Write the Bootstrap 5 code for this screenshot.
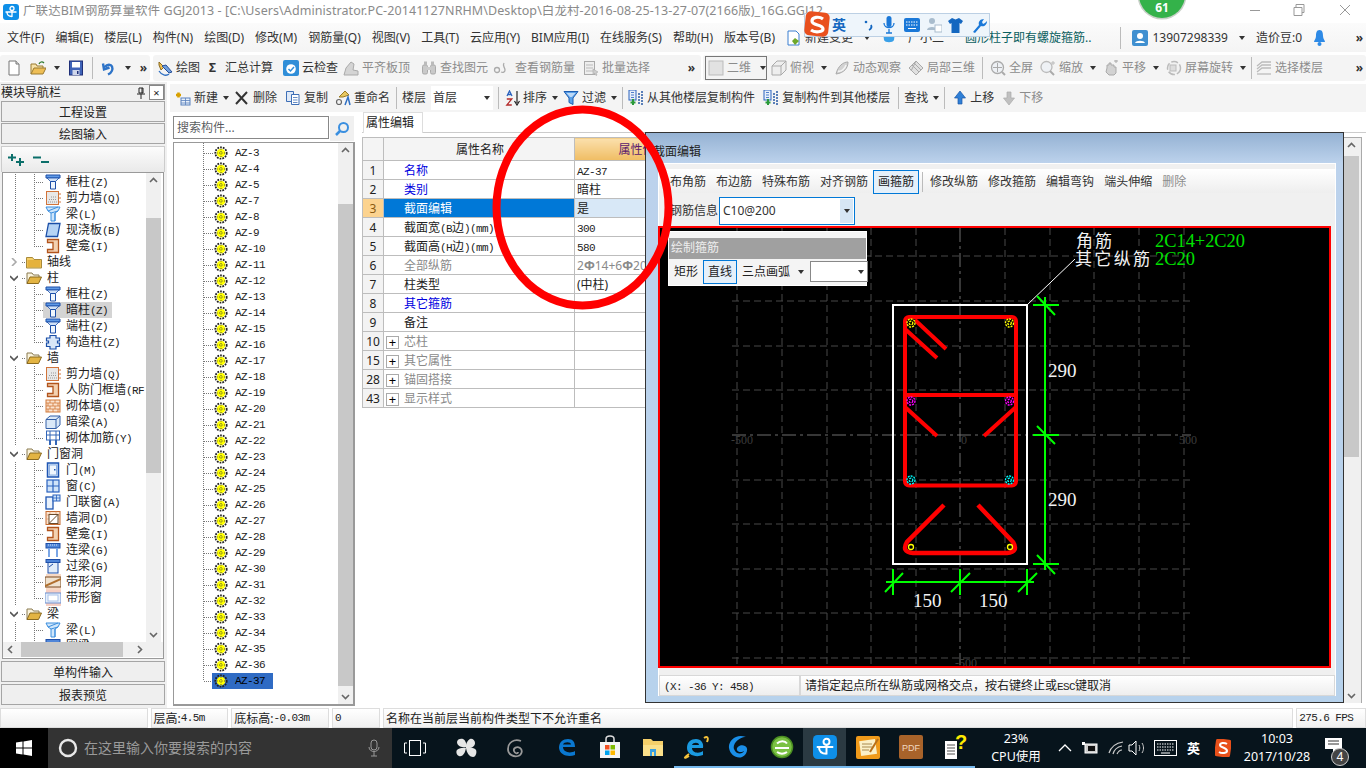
<!DOCTYPE html>
<html lang="zh-CN">
<head>
<meta charset="utf-8">
<title>GGJ2013</title>
<link href="https://cdn.jsdelivr.net/npm/bootstrap@5.3.0/dist/css/bootstrap.min.css" rel="stylesheet">
<style>
html,body{margin:0;height:768px;overflow:hidden;background:#fff;font:12px/1 "Noto Sans","Noto Sans CJK SC",sans-serif;color:#222}
.cad-app{width:1366px;height:768px;position:relative;overflow:hidden}
.m{font-family:"Liberation Mono","Noto Sans CJK SC",monospace;font-size:11px;letter-spacing:-.6px}
svg{display:block;flex:none}
.ic{width:16px;height:16px}
.ic14{width:14px;height:16px}
.title-row{height:23px;background:#fff;color:#8a8a8a;font-size:12.5px;white-space:nowrap}
.title-text{margin-left:4px;width:800px;overflow:hidden;letter-spacing:.08px}
.menu-row{height:29px;background:linear-gradient(#fbfbfb,#f4f4f4);color:#333;white-space:nowrap;padding-left:7px;gap:11px}
.menu-news{color:#0a5f5f;margin-left:10px}
.menu-num{margin-left:-7px}
.tool-row{height:30px;background:#fff;padding-top:3px}
.tg{height:26px;background:#f4f4f4;border-radius:3px;white-space:nowrap;color:#333;gap:8px}
.g1{width:150px;padding-left:6px}
.g2{width:548px;padding-left:4px;margin-left:3px}
.g3{width:663px;margin-left:2px;padding-left:2px;gap:7px}
.gs{gap:9px;margin-left:1px;margin-right:2px}
.mn3{margin-left:-3px}
.off{color:#8c8c8c}
.car{width:0;height:0;border:3px solid transparent;border-top:4px solid #333;border-bottom:0;flex:none}
.sep{width:1px;height:22px;background:#bbb;flex:none}
.sx{margin-left:-2px;margin-right:-3px}
.dim-box{width:62px;height:24px;border:1px solid #777;gap:3px;padding-left:2px;margin-right:-3px}
.pane-left{width:167px;height:626px;background:#f0f0f0;padding:2px 2px 0 1px}
.pane-head{height:16px;padding-left:0;border:1px solid #999;border-width:1px 1px 0 0;color:#222}
.x-btn{width:15px;height:15px;border:1px solid #888;background:#fff;font-size:11px}
.navbtn{--bs-btn-padding-y:0;height:21px;width:100%;background:#efefef;border:1px solid #a5a5a5;border-radius:0;font-size:12px;color:#222;line-height:21px;padding:0;display:block;margin-top:1px}
.nb-low{margin-top:2px}
.tree-tool{height:26px;margin-top:2px;background:linear-gradient(#fcfcfc,#e9e9e9);padding-left:6px;gap:8px;border:1px solid #ccc;border-width:1px 1px 0 1px}
.tree-wrap{height:487px;border:1px solid #9a9a9a;margin:0 1px;background:#fff}
.tree-body{height:469px;width:100%;overflow:hidden}
.tree-list{width:143px;padding-top:1px;overflow:hidden}
.tr{height:16px;white-space:nowrap;color:#222;background-repeat:no-repeat}
.tr-1{padding-left:23px;gap:5px;background-image:repeating-linear-gradient(to right,#777 0 1px,transparent 1px 2px);background-size:4px 1px;background-position:19px 8px}
.tr-2{padding-left:42px;gap:5px;background-image:repeating-linear-gradient(to bottom,#777 0 1px,transparent 1px 2px),repeating-linear-gradient(to bottom,#777 0 1px,transparent 1px 2px),repeating-linear-gradient(to right,#777 0 1px,transparent 1px 2px);background-size:1px 100%,1px 100%,10px 1px;background-position:12px 0,31px 0,31px 8px}
.tr-end{background-size:1px 100%,1px 9px,10px 1px}
.chev{width:8px;height:8px;margin-left:-16px;margin-right:3px}
.sel-gray{background-color:#d4d4d4;margin-left:-2px;padding:0 4px 0 2px;height:16px;gap:5px}
.vs{width:15px;background:#f0f0f0}
.vs-thumb{background:#c8c8c8}
.hs{height:15px;background:#f0f0f0;width:100%}
.arr{width:15px;height:15px;flex:none}
.tree-thumb{height:255px;margin-top:30px}
.h-thumb{width:102px;margin-left:3px}
.hs-pad{width:16px}
.comp-thumb{height:482px;margin-top:46px}
.main-thumb{height:301px;margin-top:3px;width:15px}
.pane-right{width:1199px;height:626px}
.bar2{height:28px;margin-top:2px;background:#f4f4f4;padding-left:5px;white-space:nowrap;color:#333;gap:5px;margin-left:3px}
.mg1{margin-left:1px}.mg2{margin-left:2px}.mg3{margin-left:3px}.mg6{margin-left:6px}
.floor-sel{width:62px;height:24px;background:#fff;padding-left:2px;justify-content:space-between;padding-right:3px}
.comp-col{width:195px;padding-left:6px}
.search-row{height:26px;margin-top:4px;width:181px}
.search-in{width:156px;height:23px;border:1px solid #888;border-radius:0;font-size:12px;padding:2px 3px;color:#777}
.search-btn{width:24px;height:25px;background:#f0f0f0;margin-left:1px}
.comp-box{height:564px;width:182px;border:1px solid #999;border-width:1px 2px 2px 1px;background:#fff}
.comp-list{width:163px;height:100%;overflow:hidden;padding-top:2px;background:repeating-linear-gradient(to bottom,#777 0 1px,transparent 1px 2px) 29px 0/1px 538px no-repeat}
.cr{height:16px;padding-left:31px;white-space:nowrap;color:#222;font-family:"Liberation Mono",monospace;font-size:11px;letter-spacing:-.6px;background:repeating-linear-gradient(to right,#777 0 1px,transparent 1px 2px) 30px 8px/10px 1px no-repeat}
.cr>span{display:inline-flex;align-items:center;height:16px;padding-left:9px;gap:7px;padding-right:8px;margin-left:7px}
.cr .on{background:#2f6bc4;color:#000}
.cr .ca{width:14px;height:14px;margin-left:-7px}
.work{width:1004px;height:594px;position:relative}
.tabbar{height:21px;border-bottom:1px solid #ccc;padding-left:1px;--bs-nav-tabs-border-width:0}
.tab-k{height:21px;width:60px;background:#fff;border:1px solid #ddd;border-bottom:0;color:#222;padding:4px 0 0 2px;display:block}
.pgrid{width:336px;table-layout:fixed;margin-top:4px;border-collapse:collapse;--bs-table-bg:transparent}
.c1{width:21px}.c2{width:191px}.c3{width:124px}
.pgrid td,.pgrid th{height:19px;padding:2px 0 0 2px;border:1px solid #bdbdbd;vertical-align:middle;white-space:nowrap;overflow:hidden;font-weight:400;color:#222;line-height:1;font-size:12px}
.pgrid th{height:23px;background:#f4f4f4;text-align:center;box-shadow:none}
.pgrid .num{background:#f3f3f3;text-align:center;padding:1px 0 0}
.pgrid .nm{padding-left:20px}
.pgrid td.lk{color:#0000e0}
.pgrid td.gy,.pgrid td.gy span{color:#8a8a8a}
.pgrid th.vh{background:linear-gradient(#fbe0ad,#f0bd63);color:#5a1a6e;padding:2px 0 0}
.pgrid td.rnum{background:#fcd38f;color:#8a5a10}
.pgrid td.rname{background:#0078d7;color:#fff}
.pgrid td.rval{background:#d8e8f7}
.pm{width:13px;height:13px;border:1px solid #aaa;background:#fff;font-size:13px;line-height:10px;text-align:center;margin-left:-18px;margin-right:5px;flex:none}
.pgrid td.gy .pm{color:#000}
.dlg{position:absolute;left:283px;top:20px;width:699px;height:571px;border:1px solid #333;background:linear-gradient(#95b2d3 0,#bcd2ec 30px,#b7d2ec 100%);padding:0 8px 0 12px}
.dlg-title{height:30px;color:#222;padding:13px 0 0;margin-left:-5px;white-space:nowrap}
.dlg-client{height:533px;background:#f0f0f0;width:678px;border:1px solid #fff;border-bottom:0;padding-top:5px}
.strip1{height:24px;background:linear-gradient(#fff,#eee);gap:10px;padding:2px 0 0 11px;color:#333;white-space:nowrap}
.strip2{height:30px;margin-top:3px;padding-left:11px;color:#333;white-space:nowrap}
.active-b{border:1px solid #0078d7;background:#e5f0fa;padding:5px 4px;margin:0 -5px;color:#222}
.sep-v{width:1px;height:20px;background:#bbb;margin:0 -3px 0 -2px}
.combo{width:136px;height:28px;border:1px solid #0078d7;background:#fff;margin-left:1px;padding-left:3px;justify-content:space-between}
.combo-arr{width:13px;height:24px;background:#d6e6f5;margin-right:1px}
.cv-box{height:442px;background:#000;border:2px solid #f00;margin-left:-1px;width:673px;position:relative;overflow:hidden}
.cv-svg{width:669px;height:438px}
.popup{position:absolute;left:8px;top:3px;width:199px;height:55px;background:#f4f4f4;border:1px solid #fff}
.popup-h{height:21px;margin-top:6px;background:#a0a0a0;color:#eee;padding:4px 0 0 2px}
.popup-b{height:25px;gap:5px;padding-left:5px;color:#222;white-space:nowrap}
.pop-act{margin:0;padding:5px 4px;flex:none}
.dd{width:58px;height:21px;border:1px solid #888;background:#fff;margin-left:1px;justify-content:flex-end;padding-right:3px;flex:none}
.st-row{height:21px;margin-top:7px}
.st-a{width:141px}
.st-p{height:21px;background:linear-gradient(#fff,#eee);border:1px solid #d8d8d8;white-space:nowrap;padding:4px 0 0 4px}
.vbar-main{position:absolute;left:982px;top:25px;width:18px;height:566px;background:#f0f0f0;border-right:1px solid #aaa;border-top:1px solid #aaa}
.status{height:20px;background:#fff;color:#222;white-space:nowrap;gap:3px}
.sb{height:20px;background:linear-gradient(#fff,#f0f0f0);border:1px solid #ddd;padding:1px 0 0 2px}
.s1{width:148px}.s2{width:78px}.s3{width:98px}.s4{width:48px}.s5{width:913px}.s6{width:70px}
.task{height:40px;background:#07141c;color:#fff;position:relative;white-space:nowrap}
.win-s{width:48px;height:40px;background:#000}
.task-search{width:344px;height:40px;background:#333;color:#9a9a9a;font-size:14px;padding-left:10px;gap:6px}
.tk{height:40px;width:43px;position:relative;border-bottom:2px solid transparent}
.tk.run{border-bottom-color:#76b9ed}
.tk.act{background:#2b3a42;border-bottom-color:#76b9ed}
.tasks-a{width:153px;padding-left:12px}
.ms-pin{margin-left:29px}
.ms-swirl{margin-left:28px}
.tasks-b{width:430px}
.tray{color:#fff;font-size:12.5px;line-height:18px}
.cpu-b{width:60px;margin-left:11px}
.tray-icons{gap:10px;margin-left:12px}
.spk{margin-left:-6px}
.kbd{margin-left:-2px}
.tray-s{margin-left:5px}
.clock-b{width:80px;margin-left:6px}
.notif-i{position:absolute;left:1325px;top:10px}
.notif{position:absolute;left:1331px;top:20px;width:18px;height:18px;border-radius:50%;background:#444;border:1px solid #ccc;font-size:12px;color:#fff}
.tray-lang{font-size:13px}
.ime{position:absolute;left:804px;top:13px;width:186px;height:24px;background:#eef5fb;border:1px solid #bcd0e4;gap:9px;padding-left:27px}
.ime-s{position:absolute;left:-1px;top:-3px;width:26px;height:26px}
.ime-t{color:#1467c0;font-weight:700;font-size:14px}
.ime-q{margin-left:9px}
.ime-n{margin-left:-3px}
.ball{position:absolute;left:1137px;top:-30px;width:50px;height:50px}
.ring{position:absolute;left:490px;top:104px;width:186px;height:208px;pointer-events:none}
</style>
</head>
<body>
<svg class="d-none">
<symbol id="ic-col" viewBox="0 0 16 16"><path d="M1 1h14v3H1z" fill="#5f9ae6" stroke="#1c4fa8"/><path d="M2 4l3.500 3.500h5L14 4z" fill="#cfe1f7" stroke="#1c4fa8" stroke-width=".8"/><path d="M5.500 7.500h5V15h-5z" fill="#eef5fc" stroke="#1c4fa8"/></symbol>
<symbol id="ic-wall" viewBox="0 0 16 16"><rect x="1.500" y="1.500" width="12" height="13" fill="#e8e8e8" stroke="#d2743a"/><path d="M3 12h9M4 9.500h8M6 7h5" stroke="#999" stroke-dasharray="1 1"/><path d="M14 4h2M14 8h2M14 12h2" stroke="#d2743a"/></symbol>
<symbol id="ic-beam" viewBox="0 0 16 16"><path d="M1 1h14l-2 4-3 2v8H6V7L3 5z" fill="#cfe6fb" stroke="#3b8ede"/><path d="M3 5L13 1M6 7l7-2M10 7V15" stroke="#3b8ede" fill="none"/></symbol>
<symbol id="ic-slab" viewBox="0 0 16 16"><path d="M3.500 1.500H15L12.500 14.500H1z" fill="#b6d4f5" stroke="#1b4fa8" stroke-width="1.300"/></symbol>
<symbol id="ic-niche" viewBox="0 0 16 16"><path d="M2.500 1.500H13.500V14.500H2.500V11.500H8V4.500H2.500z" fill="#f3d1b0" stroke="#b2541c" stroke-width="1.300"/></symbol>
<symbol id="ic-gz" viewBox="0 0 16 16"><path d="M5 1.500h6v2.500h3.500v3h-2v2h2v3.500H11V15H5v-2.500H1.500V9h2V7h-2V4H5z" fill="#d8e6f7" stroke="#1b4fa8" stroke-width="1.200"/></symbol>
<symbol id="ic-brick" viewBox="0 0 16 16"><rect x="1" y="2" width="14" height="12" fill="#fbe3cf" stroke="#d27a3a"/><path d="M1 5h14M1 8h14M1 11h14M5 2v3M10 2v3M3 5v3M8 5v3M13 5v3M5 8v3M10 8v3M3 11v3M8 11v3M13 11v3" stroke="#d27a3a" stroke-width=".8"/></symbol>
<symbol id="ic-abeam" viewBox="0 0 16 16"><path d="M1 5.500L5 2h10v9l-4 3.500H1z" fill="#dbe9f8" stroke="#3560a8"/><path d="M1 5.500h10v9M11 5.500L15 2" stroke="#3560a8" fill="none"/></symbol>
<symbol id="ic-mesh" viewBox="0 0 16 16"><rect x="1.500" y="1" width="13" height="9" fill="#fff" stroke="#3366b8"/><path d="M1 5h14M5 1v9M11 1v9" stroke="#3366b8"/><path d="M5 10v5M11 10v5" stroke="#3366b8" stroke-width="2"/></symbol>
<symbol id="ic-door" viewBox="0 0 16 16"><rect x="2.500" y="1" width="11" height="14" fill="#cfe0f6" stroke="#1e55b3" stroke-width="1.500"/><rect x="4.500" y="3" width="7" height="10" fill="#f0f6fd" stroke="#6d9ad8" stroke-width=".7"/><rect x="9" y="7" width="1.500" height="1.500" fill="#1e55b3"/></symbol>
<symbol id="ic-win" viewBox="0 0 16 16"><rect x="2" y="2" width="12" height="12" fill="#cfe3f9" stroke="#2a62be" stroke-width="1.200"/><path d="M8 2v12M2 8h12" stroke="#2a62be" stroke-width="1.200"/></symbol>
<symbol id="ic-dw" viewBox="0 0 16 16"><rect x="1" y="3" width="7" height="12" fill="#eaf2fc" stroke="#1e55b3" stroke-width="1.300"/><rect x="8" y="1" width="7" height="6" fill="#cfe3f9" stroke="#2a62be"/><path d="M11.500 1v6M8 4h7" stroke="#2a62be" stroke-width=".8"/></symbol>
<symbol id="ic-hole" viewBox="0 0 16 16"><rect x="1" y="1.500" width="14" height="13" fill="#fbe3cf" stroke="#c56a2e"/><path d="M1 5h14M1 9h14M5 1.500v13M11 1.500v13" stroke="#e09a68" stroke-width=".7"/><rect x="4" y="4.500" width="9" height="9" fill="#fff" stroke="#6b4a2a"/><path d="M4 13.500L13 4.500" stroke="#6b4a2a"/></symbol>
<symbol id="ic-lb" viewBox="0 0 16 16"><rect x="1" y="1.500" width="14" height="4.500" fill="#4f85d8" stroke="#1e4fa8"/><path d="M3 3h10" stroke="#cfe0f6" stroke-dasharray="1 1"/><path d="M4 6v9M12 6v9" stroke="#7aa6e6" stroke-width="2"/></symbol>
<symbol id="ic-gl" viewBox="0 0 16 16"><rect x="1" y="1.500" width="14" height="3" fill="#4f85d8" stroke="#1e4fa8"/><rect x="3" y="4.500" width="10" height="10.500" fill="#e2edfa" stroke="#1e4fa8"/><path d="M4 9l4-3" stroke="#1e4fa8"/></symbol>
<symbol id="ic-strip" viewBox="0 0 16 16"><rect x="1" y="0" width="15" height="16" fill="#f7d9c4"/><rect x="0" y="3" width="16" height="10" fill="#f0e3d0" stroke="#7a4a20"/><path d="M0 12L16 5" stroke="#b0702e" stroke-width="2"/></symbol>
<symbol id="ic-stripw" viewBox="0 0 16 16"><rect x="1" y="0" width="15" height="16" fill="#f7cfc4"/><rect x="0" y="3" width="16" height="10" fill="#e8f0fb" stroke="#6b8fd0"/><rect x="3" y="5" width="10" height="6" fill="#fff" stroke="#a9c2ea"/></symbol>
<symbol id="ic-fold" viewBox="0 0 16 16"><path d="M.5 3.500h6l1.500 2h7.500v8.500H.5z" fill="#f4cf6a" stroke="#a98a3a"/><rect x="1.500" y="6" width="13" height="7" fill="#e5b23d"/></symbol>
<symbol id="ic-open" viewBox="0 0 16 16"><path d="M1 13.500V3h5l1.500 2H13v2.500" fill="#f9f3dd" stroke="#8a7a50"/><path d="M1 13.500L4 7h11.500l-3 6.500z" fill="#e3b443" stroke="#8a6a20"/></symbol>
<symbol id="ic-az" viewBox="0 0 16 16"><circle cx="8" cy="8" r="6.500" fill="none" stroke="#222" stroke-width="2" stroke-dasharray="2 1.200"/><circle cx="8" cy="8" r="5" fill="#ffff00"/><path d="M3 8h10M8 3v10" stroke="#333" stroke-dasharray="1.200 1.600"/></symbol>
<symbol id="ic-logo" viewBox="0 0 16 16"><rect width="16" height="16" rx="3" fill="#0e8fe8"/><circle cx="9" cy="4.500" r="2" fill="none" stroke="#fff" stroke-width="1.300"/><path d="M2.500 8h11M9 6.500V13M4 8c0 3 2 4.500 5 4.500" fill="none" stroke="#fff" stroke-width="1.300"/></symbol>
<symbol id="ic-new" viewBox="0 0 16 16"><path d="M3 1h7l3 3v11H3z" fill="#fff" stroke="#777"/><path d="M10 1v3h3" fill="#ddd" stroke="#777"/></symbol>
<symbol id="ic-ofold" viewBox="0 0 16 16"><path d="M1 14V4h5l1 2h6v2" fill="#f7e2a8" stroke="#9a7a30"/><path d="M1 14l3-6h12l-3 6z" fill="#eebe55" stroke="#9a7a30"/><path d="M9 4c1-2 3-3 5-1" fill="none" stroke="#2f7a2f" stroke-width="1.300"/></symbol>
<symbol id="ic-save" viewBox="0 0 16 16"><rect x="1.500" y="1" width="13" height="14" fill="#3f63b8" stroke="#1f2f78"/><rect x="4" y="2" width="8" height="5.500" fill="#fff"/><rect x="4.500" y="10" width="7" height="5" fill="#cfd6ea"/><rect x="9" y="11" width="1.500" height="3" fill="#1f2f78"/></symbol>
<symbol id="ic-undo" viewBox="0 0 16 16"><path d="M2 3.500l1 6 5.500-2M4 7c2-3 6-3 7-.5s0 6-4 8" fill="none" stroke="#2e74c8" stroke-width="2.400"/></symbol>
<symbol id="ic-draw" viewBox="0 0 16 16"><path d="M2 2l5 5-3 3-2-5z" fill="#f0c050" stroke="#8a6a20"/><path d="M5 6l7 7 3-1-6-7z" fill="#6f9fde" stroke="#274f98"/><path d="M2 11c3 5 8 5 10 3" fill="none" stroke="#2f6fc2" stroke-width="1.300"/></symbol>
<symbol id="ic-cloud" viewBox="0 0 16 16"><rect width="16" height="16" rx="2" fill="#2f8ed8"/><circle cx="8" cy="9" r="4.800" fill="#fff"/><path d="M5.500 9l2 2 3.500-4" fill="none" stroke="#2f8ed8" stroke-width="1.500"/></symbol>
<symbol id="ic-gflat" viewBox="0 0 16 16"><path d="M1 15l2-7 5-6 3 2-1 6 5 1v4z" fill="#d4d4d4" stroke="#aaa"/></symbol>
<symbol id="ic-gbino" viewBox="0 0 16 16"><rect x="1.500" y="5" width="5" height="9" rx="1.500" fill="#c9c9c9" stroke="#aaa"/><rect x="9.500" y="5" width="5" height="9" rx="1.500" fill="#c9c9c9" stroke="#aaa"/><rect x="3" y="1.500" width="3" height="4" fill="#bbb"/><rect x="10" y="1.500" width="3" height="4" fill="#bbb"/><rect x="6" y="7" width="4" height="3" fill="#ccc"/></symbol>
<symbol id="ic-gsq" viewBox="0 0 16 16"><circle cx="4" cy="10" r="2.500" fill="none" stroke="#aaa" stroke-width="1.300"/><path d="M11 3c-2 3 1 4 1 7 0 2-2 3-4 2" fill="none" stroke="#aaa" stroke-width="1.300"/></symbol>
<symbol id="ic-gbatch" viewBox="0 0 16 16"><rect x="1.500" y="1.500" width="10" height="13" fill="#eee" stroke="#aaa"/><path d="M3 5h7M3 8h7M3 11h7" stroke="#bbb"/><path d="M10 9l5 3-2 1 1 2-1 .5-1-2-2 1z" fill="#ccc" stroke="#aaa" stroke-width=".6"/></symbol>
<symbol id="ic-g2d" viewBox="0 0 16 16"><rect x="1" y="1" width="14" height="14" fill="#e2e2e2" stroke="#bbb"/></symbol>
<symbol id="ic-g3d" viewBox="0 0 16 16"><path d="M1 6l5-5h9v9l-5 5H1z" fill="#eee" stroke="#aaa"/><path d="M1 6h9v9M10 6l5-5" fill="none" stroke="#aaa"/></symbol>
<symbol id="ic-gorb" viewBox="0 0 16 16"><path d="M2 14C4 6 9 2 14 2c0 6-4 11-12 12z" fill="#d2d2d2" stroke="#aaa"/><path d="M4 11c3 1 7-2 8-6" fill="none" stroke="#f4f4f4" stroke-width="1.500"/></symbol>
<symbol id="ic-gbox" viewBox="0 0 16 16"><path d="M8 1l7 7-7 7-7-7z" fill="#e0e0e0" stroke="#aaa"/><path d="M4 5l7 7M6 3l7 7M8 1L3 11" stroke="#aaa" fill="none"/></symbol>
<symbol id="ic-gfull" viewBox="0 0 16 16"><circle cx="7.500" cy="7.500" r="6" fill="#eef1f5" stroke="#aaa" stroke-width="1.300"/><path d="M3 7.500h9M7.500 3v9" stroke="#aaa"/><path d="M12 12l3 3" stroke="#aaa" stroke-width="2"/></symbol>
<symbol id="ic-gzoom" viewBox="0 0 16 16"><circle cx="6.500" cy="7" r="5.500" fill="#eef1f5" stroke="#bbb" stroke-width="1.300"/><path d="M10 11l4 4" stroke="#aaa" stroke-width="2"/><path d="M11 3h4M13 1v4" stroke="#bbb"/></symbol>
<symbol id="ic-gpan" viewBox="0 0 16 16"><path d="M4 8V5h2V3h2v2h3v2h2v6l-2 2H6L3 12z" fill="#d2d2d2" stroke="#aaa"/><path d="M11 1h4M13 0v3" stroke="#aaa"/></symbol>
<symbol id="ic-grot" viewBox="0 0 16 16"><circle cx="8" cy="8" r="6.500" fill="#f2f2f2" stroke="#bbb" stroke-width="1.500" stroke-dasharray="7 2"/><rect x="4" y="5" width="6" height="6" fill="#ddd" stroke="#bbb"/></symbol>
<symbol id="ic-gfloor" viewBox="0 0 16 16"><path d="M1 6l5-4h9M1 9l5-4h9M1 12l5-4h9" fill="none" stroke="#bbb" stroke-width="1.300"/><path d="M1 14h14" stroke="#bbb" stroke-width="1.300"/></symbol>
<symbol id="ic-bnew" viewBox="0 0 16 16"><path d="M1 5h5M3.500 2.500v5" stroke="#d8a000" stroke-width="2.600"/><rect x="6" y="8" width="9" height="7" fill="#e8f0fa" stroke="#5a82bd"/><path d="M6 10.500h9M6 13h9M10.500 8v7" stroke="#5a82bd" stroke-width=".8"/></symbol>
<symbol id="ic-del" viewBox="0 0 16 16"><path d="M2 2l11 12M13 2L2 14" stroke="#333" stroke-width="2"/></symbol>
<symbol id="ic-copy" viewBox="0 0 16 16"><path d="M1.500 1.500h7v10h-7z" fill="#dfe9f7" stroke="#3e6fb6"/><path d="M6.500 4.500h7.500v10H6.500z" fill="#fff" stroke="#3e6fb6"/><path d="M8 7.500h4.500M8 10h4.500M8 12.500h4.500" stroke="#3e6fb6" stroke-width=".8"/></symbol>
<symbol id="ic-ren" viewBox="0 0 16 16"><path d="M4 7L10 1l4 4-6 2z" fill="#e8c860" stroke="#9a7a20"/><circle cx="4" cy="12" r="2.500" fill="none" stroke="#666" stroke-width="1.200"/><path d="M10 15l3-8 2 8" fill="none" stroke="#2f6fc2" stroke-width="1.500"/></symbol>
<symbol id="ic-sort" viewBox="0 0 16 16"><path d="M13 1v12M10.500 11l2.500 4 2.500-4" fill="none" stroke="#222" stroke-width="1.200"/><path d="M3 6l2.500-5L8 6M4 4.500h3" fill="none" stroke="#2a62be" stroke-width="1.300"/><path d="M2.800 9h5L2.800 15h5" fill="none" stroke="#b42b2b" stroke-width="1.300"/></symbol>
<symbol id="ic-filter" viewBox="0 0 16 16"><path d="M1 1.500h14L10 8v6.500l-4-2V8z" fill="#5aa0e8" stroke="#1d5cb0"/><path d="M3.500 3h9L9 7H7z" fill="#bcd9f8"/></symbol>
<symbol id="ic-cp1" viewBox="0 0 16 16"><rect x="1" y="0" width="7" height="10" fill="#e7effa" stroke="#2a62be"/><path d="M3 2.500h3M3 5h3M3 7.500h3" stroke="#2a62be" stroke-width=".8"/><path d="M5 9v6M2.500 12.500h5" stroke="#2a9a3a" stroke-width="2"/><path d="M11 3v12M14 1v14" stroke="#5a7fb8" stroke-width="2" stroke-dasharray="2 1"/></symbol>
<symbol id="ic-up" viewBox="0 0 14 16"><path d="M7 1L1.500 8H5v6h4V8h3.500z" fill="#2f7fd6" stroke="#1a58a8" stroke-width=".7"/></symbol>
<symbol id="ic-down" viewBox="0 0 14 16"><path d="M7 15l5.500-7H9V2H5v6H1.500z" fill="#c0c0c0" stroke="#aaa" stroke-width=".7"/></symbol>
</svg>

<div class="cad-app d-flex flex-column">
  <div class="title-row d-flex align-items-center">
    <svg class="ic ms-1"><use href="#ic-logo"/></svg>
    <div class="title-text">广联达BIM钢筋算量软件 GGJ2013 - [C:\Users\Administrator.PC-20141127NRHM\Desktop\白龙村-2016-08-25-13-27-07(2166版)_16G.GGJ12]</div>
    <div class="d-flex ms-auto align-items-center">
      <svg width="114" height="23" viewBox="0 0 114 23" class="me-2"><path d="M4 10.500h10" stroke="#999"/><path d="M50 7.500v-3h8v8h-2M48 7.500h8v8h-8z" fill="none" stroke="#999"/><path d="M94 5l10 10M104 5l-10 10" stroke="#999"/></svg>
    </div>
  </div>

  <div class="menu-row d-flex align-items-center">
    <span>文件(F)</span><span>编辑(E)</span><span>楼层(L)</span><span>构件(N)</span><span>绘图(D)</span><span>修改(M)</span><span>钢筋量(Q)</span><span>视图(V)</span><span>工具(T)</span><span>云应用(Y)</span><span>BIM应用(I)</span><span>在线服务(S)</span><span>帮助(H)</span><span>版本号(B)</span>
    <span class="d-flex align-items-center gap-1"><svg class="ic" viewBox="0 0 16 16"><path d="M2 1h8l3 3v11H2z" fill="#fff" stroke="#3a7fd0"/><path d="M9 8l4 3-4 4-3-4z" fill="#6ea82a"/></svg>新建变更</span><span class="car"></span>
    <svg class="ic" viewBox="0 0 16 16"><path d="M2 2h12l-1 8c-1 3-9 3-10 0z" fill="#3aa0e8"/><path d="M4 4h8" stroke="#fff"/></svg>
    <span>广小二</span>
    <span class="menu-news">圆形柱子即有螺旋箍筋..</span>
    <span class="sep ms-4"></span>
    <svg class="ic" viewBox="0 0 16 16"><rect width="16" height="16" rx="2" fill="#3f8fd0"/><circle cx="8" cy="6" r="3" fill="#fff"/><path d="M3 13c1-3 9-3 10 0z" fill="#fff"/></svg>
    <span class="menu-num">13907298339</span><span class="car"></span><span>造价豆:0</span>
    <svg width="13" height="18" viewBox="0 0 13 18"><path d="M6.500 1C3.500 1 3 4 3 7c0 3-2 4-2 6h11c0-2-2-3-2-6 0-3-.5-6-3.500-6z" fill="#2e8ae6"/><circle cx="6.500" cy="15" r="2" fill="#2e8ae6"/></svg>
    <span class="ms-auto pe-1 fw-bold">»</span>
  </div>

  <div class="tool-row d-flex">
    <div class="tg g1 d-flex align-items-center">
      <svg class="ic"><use href="#ic-new"/></svg>
      <svg class="ic"><use href="#ic-ofold"/></svg><span class="car"></span>
      <svg class="ic"><use href="#ic-save"/></svg><span class="sep"></span>
      <svg class="ic"><use href="#ic-undo"/></svg><span class="car"></span>
      <span class="fw-bold ms-auto pe-1">»</span>
    </div>
    <div class="tg g2 d-flex align-items-center">
      <span class="d-flex align-items-center gap-1"><svg class="ic"><use href="#ic-draw"/></svg>绘图</span>
      <span class="d-flex align-items-center gs"><span class="fw-bold fs-6">Σ</span>汇总计算</span>
      <span class="d-flex align-items-center gap-1"><svg class="ic"><use href="#ic-cloud"/></svg>云检查</span>
      <span class="d-flex align-items-center gap-1 off mn3"><svg class="ic"><use href="#ic-gflat"/></svg>平齐板顶</span>
      <span class="d-flex align-items-center gap-1 off ms-1"><svg class="ic"><use href="#ic-gbino"/></svg>查找图元</span>
      <span class="d-flex align-items-center gap-2 off mn3"><svg class="ic"><use href="#ic-gsq"/></svg>查看钢筋量</span>
      <span class="d-flex align-items-center gap-1 off"><svg class="ic"><use href="#ic-gbatch"/></svg>批量选择</span>
      <span class="fw-bold ms-auto pe-2">»</span>
    </div>
    <div class="tg g3 d-flex align-items-center">
      <span class="dim-box d-flex align-items-center off"><svg class="ic"><use href="#ic-g2d"/></svg>二维<span class="car ms-2"></span></span>
      <span class="d-flex align-items-center gap-1 off"><svg class="ic"><use href="#ic-g3d"/></svg>俯视</span><span class="car"></span>
      <span class="d-flex align-items-center gap-1 off"><svg class="ic"><use href="#ic-gorb"/></svg>动态观察</span>
      <span class="d-flex align-items-center gap-1 off"><svg class="ic"><use href="#ic-gbox"/></svg>局部三维</span>
      <span class="sep"></span>
      <span class="d-flex align-items-center gap-1 off"><svg class="ic"><use href="#ic-gfull"/></svg>全屏</span>
      <span class="d-flex align-items-center gap-1 off"><svg class="ic"><use href="#ic-gzoom"/></svg>缩放</span><span class="car"></span>
      <span class="d-flex align-items-center gap-1 off"><svg class="ic"><use href="#ic-gpan"/></svg>平移</span><span class="car"></span>
      <span class="d-flex align-items-center gap-1 off"><svg class="ic"><use href="#ic-grot"/></svg>屏幕旋转</span><span class="car"></span>
      <span class="sep sx"></span>
      <span class="d-flex align-items-center gap-1 off"><svg class="ic"><use href="#ic-gfloor"/></svg>选择楼层</span>
      <span class="fw-bold ms-auto pe-1">»</span>
    </div>
  </div>

  <div class="d-flex">
    <div class="pane-left">
      <div class="pane-head d-flex align-items-center"><span>模块导航栏</span><svg class="ms-auto me-1" width="10" height="12" viewBox="0 0 10 12"><path d="M3 1h4v5H3zM1 7h8M5 7v5M6 1v5" stroke="#222" fill="none"/></svg><span class="x-btn d-flex align-items-center justify-content-center">×</span></div>
      <button type="button" class="btn navbtn">工程设置</button>
      <button type="button" class="btn navbtn">绘图输入</button>
      <div class="tree-tool d-flex align-items-center">
        <svg width="17" height="14" viewBox="0 0 17 14"><path d="M4 1v7M0 4.500h8M12 5v8M8 9h8" stroke="#0b6f6a" stroke-width="2"/></svg>
        <svg width="17" height="14" viewBox="0 0 17 14"><path d="M0 4.500h8M8 9h8" stroke="#0b6f6a" stroke-width="2"/></svg>
      </div>
      <div class="tree-wrap">
        <div class="tree-body d-flex">
          <div class="tree-list">
            <div class="tr tr-2 d-flex align-items-center"><svg class="ic"><use href="#ic-col"/></svg><span>框柱<span class="m">(Z)</span></span></div>
            <div class="tr tr-2 d-flex align-items-center"><svg class="ic"><use href="#ic-wall"/></svg><span>剪力墙<span class="m">(Q)</span></span></div>
            <div class="tr tr-2 d-flex align-items-center"><svg class="ic"><use href="#ic-beam"/></svg><span>梁<span class="m">(L)</span></span></div>
            <div class="tr tr-2 d-flex align-items-center"><svg class="ic"><use href="#ic-slab"/></svg><span>现浇板<span class="m">(B)</span></span></div>
            <div class="tr tr-2 tr-end d-flex align-items-center"><svg class="ic"><use href="#ic-niche"/></svg><span>壁龛<span class="m">(I)</span></span></div>
            <div class="tr tr-1 d-flex align-items-center"><svg class="chev" viewBox="0 0 8 8"><path d="M2 0l4 4-4 4" fill="none" stroke="#aaa" stroke-width="1.600"/></svg><svg class="ic"><use href="#ic-fold"/></svg><span>轴线</span></div>
            <div class="tr tr-1 d-flex align-items-center"><svg class="chev" viewBox="0 0 8 8"><path d="M0 2l4 4 4-4" fill="none" stroke="#555" stroke-width="1.600"/></svg><svg class="ic"><use href="#ic-open"/></svg><span>柱</span></div>
            <div class="tr tr-2 d-flex align-items-center"><svg class="ic"><use href="#ic-col"/></svg><span>框柱<span class="m">(Z)</span></span></div>
            <div class="tr tr-2 d-flex align-items-center"><span class="sel-gray d-flex align-items-center"><svg class="ic"><use href="#ic-col"/></svg><span>暗柱<span class="m">(Z)</span></span></span></div>
            <div class="tr tr-2 d-flex align-items-center"><svg class="ic"><use href="#ic-col"/></svg><span>端柱<span class="m">(Z)</span></span></div>
            <div class="tr tr-2 tr-end d-flex align-items-center"><svg class="ic"><use href="#ic-gz"/></svg><span>构造柱<span class="m">(Z)</span></span></div>
            <div class="tr tr-1 d-flex align-items-center"><svg class="chev" viewBox="0 0 8 8"><path d="M0 2l4 4 4-4" fill="none" stroke="#555" stroke-width="1.600"/></svg><svg class="ic"><use href="#ic-open"/></svg><span>墙</span></div>
            <div class="tr tr-2 d-flex align-items-center"><svg class="ic"><use href="#ic-wall"/></svg><span>剪力墙<span class="m">(Q)</span></span></div>
            <div class="tr tr-2 d-flex align-items-center"><svg class="ic"><use href="#ic-niche"/></svg><span>人防门框墙<span class="m">(RF</span></span></div>
            <div class="tr tr-2 d-flex align-items-center"><svg class="ic"><use href="#ic-brick"/></svg><span>砌体墙<span class="m">(Q)</span></span></div>
            <div class="tr tr-2 d-flex align-items-center"><svg class="ic"><use href="#ic-abeam"/></svg><span>暗梁<span class="m">(A)</span></span></div>
            <div class="tr tr-2 tr-end d-flex align-items-center"><svg class="ic"><use href="#ic-mesh"/></svg><span>砌体加筋<span class="m">(Y)</span></span></div>
            <div class="tr tr-1 d-flex align-items-center"><svg class="chev" viewBox="0 0 8 8"><path d="M0 2l4 4 4-4" fill="none" stroke="#555" stroke-width="1.600"/></svg><svg class="ic"><use href="#ic-open"/></svg><span>门窗洞</span></div>
            <div class="tr tr-2 d-flex align-items-center"><svg class="ic"><use href="#ic-door"/></svg><span>门<span class="m">(M)</span></span></div>
            <div class="tr tr-2 d-flex align-items-center"><svg class="ic"><use href="#ic-win"/></svg><span>窗<span class="m">(C)</span></span></div>
            <div class="tr tr-2 d-flex align-items-center"><svg class="ic"><use href="#ic-dw"/></svg><span>门联窗<span class="m">(A)</span></span></div>
            <div class="tr tr-2 d-flex align-items-center"><svg class="ic"><use href="#ic-hole"/></svg><span>墙洞<span class="m">(D)</span></span></div>
            <div class="tr tr-2 d-flex align-items-center"><svg class="ic"><use href="#ic-niche"/></svg><span>壁龛<span class="m">(I)</span></span></div>
            <div class="tr tr-2 d-flex align-items-center"><svg class="ic"><use href="#ic-lb"/></svg><span>连梁<span class="m">(G)</span></span></div>
            <div class="tr tr-2 d-flex align-items-center"><svg class="ic"><use href="#ic-gl"/></svg><span>过梁<span class="m">(G)</span></span></div>
            <div class="tr tr-2 d-flex align-items-center"><svg class="ic"><use href="#ic-strip"/></svg><span>带形洞</span></div>
            <div class="tr tr-2 tr-end d-flex align-items-center"><svg class="ic"><use href="#ic-stripw"/></svg><span>带形窗</span></div>
            <div class="tr tr-1 d-flex align-items-center"><svg class="chev" viewBox="0 0 8 8"><path d="M0 2l4 4 4-4" fill="none" stroke="#555" stroke-width="1.600"/></svg><svg class="ic"><use href="#ic-open"/></svg><span>梁</span></div>
            <div class="tr tr-2 d-flex align-items-center"><svg class="ic"><use href="#ic-beam"/></svg><span>梁<span class="m">(L)</span></span></div>
            <div class="tr tr-2 d-flex align-items-center"><svg class="ic"><use href="#ic-gl"/></svg><span>圈梁<span class="m">(B)</span></span></div>
          </div>
          <div class="vs d-flex flex-column">
            <svg class="arr" viewBox="0 0 15 15"><path d="M4 9l3.500-3.500L11 9" fill="none" stroke="#666" stroke-width="1.600"/></svg>
            <div class="vs-thumb tree-thumb"></div>
            <div class="flex-grow-1"></div>
            <svg class="arr" viewBox="0 0 15 15"><path d="M4 6l3.500 3.500L11 6" fill="none" stroke="#666" stroke-width="1.600"/></svg>
          </div>
        </div>
        <div class="hs d-flex">
          <svg class="arr" viewBox="0 0 15 15"><path d="M9 4L5.500 7.500 9 11" fill="none" stroke="#666" stroke-width="1.600"/></svg>
          <div class="vs-thumb h-thumb"></div>
          <div class="flex-grow-1"></div>
          <svg class="arr" viewBox="0 0 15 15"><path d="M6 4l3.500 3.500L6 11" fill="none" stroke="#666" stroke-width="1.600"/></svg>
          <div class="hs-pad"></div>
        </div>
      </div>
      <button type="button" class="btn navbtn nb-low">单构件输入</button>
      <button type="button" class="btn navbtn nb-low">报表预览</button>
    </div>

    <div class="pane-right d-flex flex-column">
      <div class="bar2 d-flex align-items-center">
        <span class="d-flex align-items-center gap-1"><svg class="ic"><use href="#ic-bnew"/></svg>新建</span><span class="car"></span>
        <span class="d-flex align-items-center gap-1"><svg class="ic"><use href="#ic-del"/></svg>删除</span>
        <span class="d-flex align-items-center gap-1 ms-1"><svg class="ic"><use href="#ic-copy"/></svg>复制</span>
        <span class="d-flex align-items-center gap-1 mg2"><svg class="ic"><use href="#ic-ren"/></svg>重命名</span>
        <span class="sep mg1"></span><span>楼层</span>
        <span class="floor-sel d-flex align-items-center">首层<span class="car"></span></span>
        <span class="sep"></span>
        <span class="d-flex align-items-center gap-1"><svg class="ic"><use href="#ic-sort"/></svg>排序</span><span class="car"></span>
        <span class="d-flex align-items-center gap-1"><svg class="ic"><use href="#ic-filter"/></svg>过滤</span><span class="car"></span>
        <span class="sep"></span>
        <span class="d-flex align-items-center gap-1"><svg class="ic"><use href="#ic-cp1"/></svg>从其他楼层复制构件</span>
        <span class="d-flex align-items-center gap-1 mg3"><svg class="ic"><use href="#ic-cp1"/></svg>复制构件到其他楼层</span>
        <span class="sep ms-1"></span>
        <span>查找</span><span class="car"></span>
        <span class="sep"></span>
        <span class="d-flex align-items-center gap-1 mg3"><svg class="ic14"><use href="#ic-up"/></svg>上移</span>
        <span class="d-flex align-items-center gap-1 off ms-1"><svg class="ic14"><use href="#ic-down"/></svg>下移</span>
      </div>
      <div class="d-flex">
        <div class="comp-col">
          <div class="search-row d-flex">
            <input class="form-control search-in" placeholder="搜索构件..." value="">
            <div class="search-btn d-flex align-items-center justify-content-center"><svg width="16" height="16" viewBox="0 0 16 16"><circle cx="9.500" cy="6.500" r="4.500" fill="none" stroke="#3a8fe0" stroke-width="2"/><path d="M6 10l-4 4" stroke="#3a8fe0" stroke-width="2.500"/></svg></div>
          </div>
          <div class="comp-box d-flex">
            <div class="comp-list">
              <div class="cr"><span><svg class="ca"><use href="#ic-az"/></svg>AZ-3</span></div>
              <div class="cr"><span><svg class="ca"><use href="#ic-az"/></svg>AZ-4</span></div>
              <div class="cr"><span><svg class="ca"><use href="#ic-az"/></svg>AZ-5</span></div>
              <div class="cr"><span><svg class="ca"><use href="#ic-az"/></svg>AZ-7</span></div>
              <div class="cr"><span><svg class="ca"><use href="#ic-az"/></svg>AZ-8</span></div>
              <div class="cr"><span><svg class="ca"><use href="#ic-az"/></svg>AZ-9</span></div>
              <div class="cr"><span><svg class="ca"><use href="#ic-az"/></svg>AZ-10</span></div>
              <div class="cr"><span><svg class="ca"><use href="#ic-az"/></svg>AZ-11</span></div>
              <div class="cr"><span><svg class="ca"><use href="#ic-az"/></svg>AZ-12</span></div>
              <div class="cr"><span><svg class="ca"><use href="#ic-az"/></svg>AZ-13</span></div>
              <div class="cr"><span><svg class="ca"><use href="#ic-az"/></svg>AZ-14</span></div>
              <div class="cr"><span><svg class="ca"><use href="#ic-az"/></svg>AZ-15</span></div>
              <div class="cr"><span><svg class="ca"><use href="#ic-az"/></svg>AZ-16</span></div>
              <div class="cr"><span><svg class="ca"><use href="#ic-az"/></svg>AZ-17</span></div>
              <div class="cr"><span><svg class="ca"><use href="#ic-az"/></svg>AZ-18</span></div>
              <div class="cr"><span><svg class="ca"><use href="#ic-az"/></svg>AZ-19</span></div>
              <div class="cr"><span><svg class="ca"><use href="#ic-az"/></svg>AZ-20</span></div>
              <div class="cr"><span><svg class="ca"><use href="#ic-az"/></svg>AZ-21</span></div>
              <div class="cr"><span><svg class="ca"><use href="#ic-az"/></svg>AZ-22</span></div>
              <div class="cr"><span><svg class="ca"><use href="#ic-az"/></svg>AZ-23</span></div>
              <div class="cr"><span><svg class="ca"><use href="#ic-az"/></svg>AZ-24</span></div>
              <div class="cr"><span><svg class="ca"><use href="#ic-az"/></svg>AZ-25</span></div>
              <div class="cr"><span><svg class="ca"><use href="#ic-az"/></svg>AZ-26</span></div>
              <div class="cr"><span><svg class="ca"><use href="#ic-az"/></svg>AZ-27</span></div>
              <div class="cr"><span><svg class="ca"><use href="#ic-az"/></svg>AZ-28</span></div>
              <div class="cr"><span><svg class="ca"><use href="#ic-az"/></svg>AZ-29</span></div>
              <div class="cr"><span><svg class="ca"><use href="#ic-az"/></svg>AZ-30</span></div>
              <div class="cr"><span><svg class="ca"><use href="#ic-az"/></svg>AZ-31</span></div>
              <div class="cr"><span><svg class="ca"><use href="#ic-az"/></svg>AZ-32</span></div>
              <div class="cr"><span><svg class="ca"><use href="#ic-az"/></svg>AZ-33</span></div>
              <div class="cr"><span><svg class="ca"><use href="#ic-az"/></svg>AZ-34</span></div>
              <div class="cr"><span><svg class="ca"><use href="#ic-az"/></svg>AZ-35</span></div>
              <div class="cr"><span><svg class="ca"><use href="#ic-az"/></svg>AZ-36</span></div>
              <div class="cr"><span class="on"><svg class="ca"><use href="#ic-az"/></svg>AZ-37</span></div>
            </div>
            <div class="vs d-flex flex-column ms-auto">
              <svg class="arr" viewBox="0 0 15 15"><path d="M4 9l3.500-3.500L11 9" fill="none" stroke="#666" stroke-width="1.600"/></svg>
              <div class="vs-thumb comp-thumb"></div>
              <div class="flex-grow-1"></div>
              <svg class="arr" viewBox="0 0 15 15"><path d="M4 6l3.500 3.500L11 6" fill="none" stroke="#666" stroke-width="1.600"/></svg>
            </div>
          </div>
        </div>

        <div class="work">
          <ul class="nav nav-tabs tabbar"><li class="nav-item"><span class="tab-k">属性编辑</span></li></ul>
          <table class="table pgrid mb-0">
            <colgroup><col class="c1"><col class="c2"><col class="c3"></colgroup>
            <thead><tr><th></th><th>属性名称</th><th class="vh">属性值</th></tr></thead>
            <tbody>
              <tr><td class="num">1</td><td class="nm lk">名称</td><td class="val"><span class="m">AZ-37</span></td></tr>
              <tr><td class="num">2</td><td class="nm lk">类别</td><td class="val">暗柱</td></tr>
              <tr><td class="num rnum">3</td><td class="nm rname">截面编辑</td><td class="val rval">是</td></tr>
              <tr><td class="num">4</td><td class="nm">截面宽<span class="m">(B</span>边<span class="m">)(mm)</span></td><td class="val"><span class="m">300</span></td></tr>
              <tr><td class="num">5</td><td class="nm">截面高<span class="m">(H</span>边<span class="m">)(mm)</span></td><td class="val"><span class="m">580</span></td></tr>
              <tr><td class="num">6</td><td class="nm gy">全部纵筋</td><td class="val gy">2<b>Φ</b>14+6<b>Φ</b>20</td></tr>
              <tr><td class="num">7</td><td class="nm">柱类型</td><td class="val">(中柱)</td></tr>
              <tr><td class="num">8</td><td class="nm lk">其它箍筋</td><td class="val"></td></tr>
              <tr><td class="num">9</td><td class="nm">备注</td><td class="val"></td></tr>
              <tr><td class="num">10</td><td class="nm gy"><span class="d-flex align-items-center"><span class="pm">+</span>芯柱</span></td><td class="val"></td></tr>
              <tr><td class="num">15</td><td class="nm gy"><span class="d-flex align-items-center"><span class="pm">+</span>其它属性</span></td><td class="val"></td></tr>
              <tr><td class="num">28</td><td class="nm gy"><span class="d-flex align-items-center"><span class="pm">+</span>锚固搭接</span></td><td class="val"></td></tr>
              <tr><td class="num">43</td><td class="nm gy"><span class="d-flex align-items-center"><span class="pm">+</span>显示样式</span></td><td class="val"></td></tr>
            </tbody>
          </table>

          <div class="dlg">
            <div class="dlg-title">截面编辑</div>
            <div class="dlg-client">
              <div class="strip1 d-flex align-items-center">
                <span>布角筋</span><span>布边筋</span><span>特殊布筋</span><span>对齐钢筋</span><span class="active-b">画箍筋</span><span class="sep-v"></span><span>修改纵筋</span><span>修改箍筋</span><span>编辑弯钩</span><span>端头伸缩</span><span class="off">删除</span>
              </div>
              <div class="strip2 d-flex align-items-center">
                <span>钢筋信息</span>
                <span class="combo d-flex align-items-center">C10@200<span class="combo-arr d-flex align-items-center justify-content-center"><span class="car"></span></span></span>
              </div>
              <div class="cv-box">
                <svg class="cv-svg" viewBox="660 228 669 438">
                  <g stroke="#484848" stroke-dasharray="7 4">
                    <path d="M737 228V665M782 228V665M827 228V665M871 228V665M916 228V665M1005 228V665M1050 228V665M1094 228V665M1139 228V665M1184 228V665"/>
                    <path d="M732 256H1191M732 301H1191M732 346H1191M732 390H1191M732 480H1191M732 524H1191M732 569H1191M732 613H1191M732 658H1191"/>
                  </g>
                  <g stroke="#6e6e6e" stroke-dasharray="14 4 3 4"><path d="M960 228V665M732 435H1191"/></g>
                  <g fill="#3c3c3c" font-family="Liberation Serif,serif" font-size="12"><text x="731" y="444">-500</text><text x="1179" y="444">500</text><text x="961" y="444">0</text><text x="955" y="667">-500</text></g>
                  <path d="M1027 305L1075 259" stroke="#fff"/>
                  <rect x="893" y="305" width="134" height="259" fill="none" stroke="#fff" stroke-width="2"/>
                  <g fill="none" stroke="#f00" stroke-width="4">
                    <rect x="905" y="317" width="111" height="168.500" rx="4"/>
                    <path d="M905 395H1016M915 320L946 349M905 329L937 358M905 407L937 436M1016 407L984 436"/>
                    <path d="M944 505L907 542Q901 552 913 553H1007Q1019 552 1013 542L978 505" stroke-width="4.500"/>
                  </g>
                  <g fill="#000" stroke-width="1.300" stroke-dasharray="2 1">
                    <g stroke="#ff0"><circle cx="911" cy="323" r="4"/><circle cx="1009.500" cy="323" r="4"/><circle cx="911" cy="323" r="1.800"/><circle cx="1009.500" cy="323" r="1.800"/></g>
                    <g stroke="#f0f"><circle cx="911" cy="401" r="4"/><circle cx="1009.500" cy="401" r="4"/><circle cx="911" cy="401" r="1.800"/><circle cx="1009.500" cy="401" r="1.800"/></g>
                    <g stroke="#0ff"><circle cx="911" cy="480" r="4"/><circle cx="1009.500" cy="480" r="4"/><circle cx="911" cy="480" r="1.800"/><circle cx="1009.500" cy="480" r="1.800"/></g>
                  </g>
                  <g fill="#000" stroke="#ff0" stroke-width="1.300"><circle cx="911" cy="547" r="2.500"/><circle cx="1010" cy="547" r="2.500"/></g>
                  <g stroke="#0f0" stroke-width="2" fill="none">
                    <path d="M1045 297V570M1033 305H1059M1033 435H1059M1033 564H1059M1037 296L1055 315M1037 426L1055 444M1037 555L1055 574"/>
                    <path d="M886 582H1034M893 569V595M960 569V595M1027 569V595M885 592L903 573M951 592L970 573M1018 592L1037 573"/>
                  </g>
                  <g fill="#f2f2f2" font-family="Liberation Serif,serif" font-size="19">
                    <text x="1048" y="377">290</text><text x="1048" y="506">290</text><text x="913" y="607">150</text><text x="979" y="607">150</text>
                  </g>
                  <g fill="#f2f2f2" font-size="17" font-family="Noto Sans CJK SC,sans-serif"><text x="1076" y="247" textLength="36">角筋</text><text x="1075" y="265" textLength="75">其它纵筋</text></g>
                  <g fill="#00e000" font-family="Liberation Serif,serif" font-size="18"><text x="1155" y="247" textLength="90" lengthAdjust="spacingAndGlyphs">2C14+2C20</text><text x="1155" y="265" textLength="40" lengthAdjust="spacingAndGlyphs">2C20</text></g>
                </svg>
                <div class="popup">
                  <div class="popup-h">绘制箍筋</div>
                  <div class="popup-b d-flex align-items-center">
                    <span>矩形</span><span class="active-b pop-act">直线</span><span>三点画弧</span><span class="car ms-1"></span>
                    <span class="dd d-flex align-items-center"><span class="car"></span></span>
                  </div>
                </div>
              </div>
              <div class="st-row d-flex">
                <div class="st-p st-a"><span class="m">(X: -36 Y: 458)</span></div>
                <div class="st-p flex-grow-1">请指定起点所在纵筋或网格交点，按右键终止或<span class="m">ESC</span>键取消</div>
              </div>
            </div>
          </div>

          <div class="vbar-main d-flex flex-column">
            <svg class="arr" viewBox="0 0 15 15"><path d="M4 9l3.500-3.500L11 9" fill="none" stroke="#666" stroke-width="1.600"/></svg>
            <div class="vs-thumb main-thumb"></div>
            <div class="flex-grow-1"></div>
            <svg class="arr" viewBox="0 0 15 15"><path d="M4 6l3.500 3.500L11 6" fill="none" stroke="#666" stroke-width="1.600"/></svg>
          </div>
        </div>
      </div>
    </div>
  </div>

  <div class="status d-flex">
    <div class="sb s1"></div>
    <div class="sb s2 d-flex align-items-center">层高:<span class="m">4.5m</span></div>
    <div class="sb s3 d-flex align-items-center">底标高:<span class="m">-0.03m</span></div>
    <div class="sb s4 d-flex align-items-center"><span class="m">0</span></div>
    <div class="sb s5 d-flex align-items-center">名称在当前层当前构件类型下不允许重名</div>
    <div class="sb s6 d-flex align-items-center"><span class="m">275.6 FPS</span></div>
  </div>

  <div class="task d-flex align-items-center">
    <div class="win-s d-flex align-items-center justify-content-center"><svg width="16" height="16" viewBox="0 0 16 16"><path d="M0 2.500L6.500 1.600V7.500H0zM7.500 1.400L16 0V7.500H7.500zM0 8.500H6.500V14.400L0 13.500zM7.500 8.500H16V16L7.500 14.600z" fill="#fff"/></svg></div>
    <div class="task-search d-flex align-items-center">
      <svg width="20" height="20" viewBox="0 0 20 20"><circle cx="10" cy="10" r="8" fill="none" stroke="#e8e8e8" stroke-width="2.400"/></svg>
      <span>在这里输入你要搜索的内容</span>
      <svg class="ms-auto me-3" width="12" height="18" viewBox="0 0 12 18"><rect x="3" y="1" width="6" height="10" rx="3" fill="none" stroke="#999"/><path d="M1 8c0 6 10 6 10 0M6 13v4M3 17h6" fill="none" stroke="#999"/></svg>
    </div>
    <div class="d-flex align-items-center tasks-a">
      <svg width="22" height="18" viewBox="0 0 22 18"><rect x="5.500" y="1.500" width="11" height="15" fill="none" stroke="#fff"/><path d="M3 4H.5v10H3M19 4h2.500v10H19" fill="none" stroke="#fff"/></svg>
      <svg class="ms-pin" width="22" height="22" viewBox="0 0 22 22"><g fill="#e6e6e6"><path d="M11 10C5 11 2 8 2 5s4-4 6-3 4 4 3 8z"/><path d="M11 11c-1 6-4 9-7 8s-3-5-2-6 5-3 9-2z"/><path d="M11 11c6 1 9-2 9-5s-3-5-5-4-5 5-4 9z"/><path d="M11 11c1 6 4 9 7 9s4-5 3-7-6-3-10-2z"/></g></svg>
      <svg class="ms-swirl" width="22" height="22" viewBox="0 0 22 22"><path d="M16 4C9 1 3 6 3 12s6 8 10 7 5-6 2-8-7 0-6 3 4 3 4 1" fill="none" stroke="#999" stroke-width="1.800"/></svg>
    </div>
    <div class="d-flex align-items-center tasks-b">
      <div class="tk d-flex align-items-center justify-content-center"><svg width="22" height="22" viewBox="0 0 22 22"><path d="M3 12c0-6 4-9 9-9s7 3 7 8H7c0 5 7 7 12 4v4c-6 2-15 1-16-7zM7 8.500h8c0-3-7-3-8 0z" fill="#0a78d0"/></svg></div>
      <div class="tk d-flex align-items-center justify-content-center"><svg width="22" height="24" viewBox="0 0 22 24"><path d="M1 7h20v16H1z" fill="#f4f4f4"/><path d="M7 7V4c0-4 8-4 8 0v3" fill="none" stroke="#ddd" stroke-width="1.500"/><rect x="6" y="10" width="4.500" height="4.500" fill="#f25022"/><rect x="11.500" y="10" width="4.500" height="4.500" fill="#7fba00"/><rect x="6" y="15.500" width="4.500" height="4.500" fill="#00a4ef"/><rect x="11.500" y="15.500" width="4.500" height="4.500" fill="#ffb900"/></svg></div>
      <div class="tk d-flex align-items-center justify-content-center"><svg width="22" height="22" viewBox="0 0 22 22"><path d="M1 3h8l2 2h10v15H1z" fill="#f5cf69"/><path d="M1 9h20v11H1z" fill="#fbe08a"/><path d="M8 20v-7h6v7h-2v-4h-2v4z" fill="#3aa0e0"/></svg></div>
      <div class="tk run d-flex align-items-center justify-content-center"><svg width="26" height="26" viewBox="0 0 26 26"><path d="M4 14c0-6 4-9 9-9s8 4 7 9H9c0 5 7 6 11 3v4c-7 3-16 0-16-7zM9 11h7c0-3-6-3-7 0z" fill="#1a9ae0"/><path d="M6 20C0 24 1 25 6 22M21 4c3-2 5-1 3 4" fill="none" stroke="#f5c23a" stroke-width="2"/></svg></div>
      <div class="tk run d-flex align-items-center justify-content-center"><svg width="24" height="26" viewBox="0 0 24 26"><path d="M19 3C9-1 1 7 2 14s8 11 13 9 7-9 3-11-9 1-8 4 6 2 7 1c-1 3-8 4-10-2s7-13 12-12z" fill="#1a8fe8"/></svg></div>
      <div class="tk run d-flex align-items-center justify-content-center"><svg width="24" height="24" viewBox="0 0 24 24"><circle cx="12" cy="12" r="10.500" fill="#7ac143" stroke="#4b8f22" stroke-width="1.500"/><path d="M5 13h14M7 8.500c3-3 8-3 10 0M7 17c3 2 7 2 10 0" fill="none" stroke="#fff" stroke-width="2"/></svg></div>
      <div class="tk act d-flex align-items-center justify-content-center"><svg width="24" height="24"><use href="#ic-logo"/></svg></div>
      <div class="tk run d-flex align-items-center justify-content-center"><svg width="26" height="26" viewBox="0 0 26 26"><rect x="1" y="2" width="24" height="23" rx="2" fill="#f09a1a"/><rect x="5" y="6" width="16" height="15" fill="#fbf0c8" transform="rotate(-8 13 13)"/><path d="M7 10h10M7 13h10M7 16h7" stroke="#a88a50"/><path d="M15 18L23 5" stroke="#b9701a" stroke-width="2"/></svg></div>
      <div class="tk run d-flex align-items-center justify-content-center"><svg width="26" height="26" viewBox="0 0 26 26"><rect x="1" y="1" width="24" height="24" rx="2" fill="#a8632a"/><text x="13" y="17" text-anchor="middle" fill="#f0d8c0" font-size="9" font-family="Liberation Sans,sans-serif">PDF</text></svg></div>
      <div class="tk run d-flex align-items-center justify-content-center"><svg width="26" height="28" viewBox="0 0 26 28"><rect x="4" y="8" width="12" height="18" fill="#fff"/><path d="M6 12h8M6 15h8M6 18h8M6 21h8" stroke="#555"/><text x="20" y="16" text-anchor="middle" fill="#ffeb00" font-size="20" font-weight="700" font-family="Liberation Sans,sans-serif">?</text></svg></div>
    </div>
    <div class="tray cpu-b text-center"><div>23%</div><div>CPU使用</div></div>
    <div class="d-flex align-items-center tray-icons">
      <svg width="14" height="10" viewBox="0 0 14 10"><path d="M1 8l6-6 6 6" fill="none" stroke="#fff" stroke-width="1.300"/></svg>
      <svg width="16" height="14" viewBox="0 0 16 14"><rect x="3" y="3" width="12" height="9" fill="#ccc" stroke="#fff"/><rect x="6" y="5" width="7" height="5" fill="#111"/><path d="M0 1h3v3H0" fill="#fff"/></svg>
      <svg width="16" height="14" viewBox="0 0 16 14"><path d="M1 12C3 6 8 2 15 1M5 13c1-4 4-7 9-8M9 13c1-2 3-4 5-4" fill="none" stroke="#ccc" stroke-width="1.200"/></svg>
      <svg class="spk" width="18" height="16" viewBox="0 0 18 16"><path d="M1 5h3l4-4v14l-4-4H1z" fill="none" stroke="#fff"/><path d="M11 5c1 2 1 4 0 6M14 3c2 3 2 7 0 10" fill="none" stroke="#ccc"/></svg>
      <svg class="kbd" width="23" height="16" viewBox="0 0 23 16"><rect x=".5" y=".5" width="22" height="15" fill="none" stroke="#fff"/><path d="M3 4h17M3 7h17M3 10h17" stroke="#fff" stroke-dasharray="1.500 1"/><path d="M7 13h9" stroke="#fff"/></svg>
      <span class="fw-bold tray-lang">英</span>
      <svg class="tray-s" width="16" height="18" viewBox="0 0 16 18"><rect x="0" y="0" width="16" height="18" rx="3" fill="#e8501a" transform="rotate(8 8 9)"/><path d="M12 5c-3-2-7-1-7 1 0 3 7 2 7 6 0 2-5 3-8 1" fill="none" stroke="#fff" stroke-width="2"/></svg>
    </div>
    <div class="tray text-center clock-b"><div>10:03</div><div>2017/10/28</div></div>
    <svg class="notif-i" width="17" height="15" viewBox="0 0 17 15"><path d="M0 0h17v11h-6l-3 4v-4H0z" fill="#fff"/><path d="M3 3h11M3 6h11" stroke="#333"/></svg>
    <div class="notif d-flex align-items-center justify-content-center">4</div>
  </div>

  <div class="ime d-flex align-items-center">
    <svg class="ime-s" viewBox="0 0 26 26"><rect x="1" y="1" width="24" height="24" rx="5" fill="#e9501e" transform="rotate(6 13 13)"/><path d="M19 8c-4-3-11-2-11 2 0 5 11 3 11 8 0 3-8 4-12 1" fill="none" stroke="#fff" stroke-width="3.200"/></svg>
    <span class="ime-t">英</span>
    <svg class="ime-q" width="10" height="12" viewBox="0 0 10 12"><circle cx="2" cy="3" r="1.300" fill="#1467c0"/><path d="M7 6c1 2 0 4-2 5" fill="none" stroke="#1467c0" stroke-width="1.800"/></svg>
    <svg width="12" height="18" viewBox="0 0 12 18"><rect x="3.500" y="0" width="5" height="11" rx="2.500" fill="#1a78d8"/><path d="M1 7c0 6 10 6 10 0M6 13v4M3 17h6" fill="none" stroke="#1a78d8" stroke-width="1.300"/></svg>
    <svg width="16" height="14" viewBox="0 0 16 14"><rect width="16" height="14" rx="2" fill="#1a78d8"/><path d="M2 4h12M2 7h12" stroke="#fff" stroke-dasharray="1.500 1"/><path d="M4 10.500h8" stroke="#fff"/></svg>
    <svg class="ime-n" width="16" height="16" viewBox="0 0 16 16"><circle cx="6" cy="4" r="3" fill="#a9bccd"/><path d="M1 13c0-4 10-4 10 0z" fill="#a9bccd"/><rect x="9" y="8" width="7" height="7" fill="#fff" stroke="#a9bccd"/></svg>
    <svg class="ime-n" width="15" height="15" viewBox="0 0 15 15"><path d="M4 0l3.500 1.500L11 0l4 3-2 3-1.500-1v10h-8V5L2 6 0 3z" fill="#1467c0"/></svg>
    <svg width="15" height="15" viewBox="0 0 15 15"><path d="M1 14l6-7c-1-3 1-6 5-6l-2 3 1 2 2-1 2-2c0 4-3 6-6 5l-6 7z" fill="#1a78d8"/></svg>
  </div>

  <svg class="ball" viewBox="0 0 50 50"><circle cx="25" cy="25" r="24.500" fill="#c8d0c8"/><circle cx="25" cy="25" r="23" fill="#34b24a"/><text x="25" y="42" text-anchor="middle" fill="#fff" font-size="12" font-weight="700" font-family="Noto Sans,sans-serif">61</text></svg>

  <svg class="ring" viewBox="490 104 186 208"><ellipse cx="582.500" cy="207.500" rx="86" ry="98" fill="none" stroke="#f00" stroke-width="8"/></svg>
</div>
<script src="https://cdn.jsdelivr.net/npm/bootstrap@5.3.0/dist/js/bootstrap.bundle.min.js"></script>
</body>
</html>
